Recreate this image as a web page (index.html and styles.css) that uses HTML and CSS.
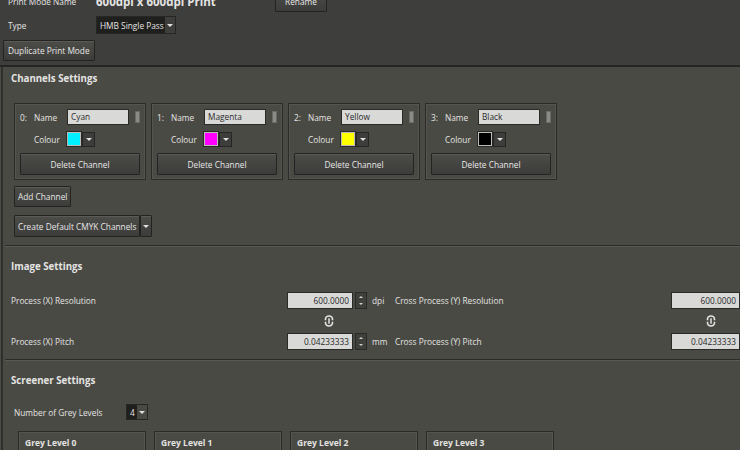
FILE: index.html
```html
<!DOCTYPE html>
<html lang="en">

<head>
    <meta charset="UTF-8">
    <title>Print Mode</title>
    <link rel="stylesheet" href="styles.css">
</head>

<body>
    <div class="header">
        <div class="row name-row">
            <span class="label">Print Mode Name</span>
            <span class="mode-title">600dpi x 600dpi Print</span>
            <button class="btn rename-btn">Rename</button>
        </div>
        <div class="row type-row">
            <span class="label">Type</span>
            <div class="combo dark-combo">
                <span class="combo-text">HMB Single Pass</span>
                <span class="combo-arrow"></span>
            </div>
        </div>
        <button class="btn dup-btn">Duplicate Print Mode</button>
    </div>

    <div class="main">
        <div class="section first">
            <h2>Channels Settings</h2>
            <div class="channels" id="channels"></div>
            <button class="btn add-btn">Add Channel</button>
            <div class="split-btn">
                <button class="btn split-main">Create Default CMYK Channels</button>
                <button class="btn split-arrow"><span class="combo-arrow"></span></button>
            </div>
        </div>

        <div class="section">
            <h2>Image Settings</h2>
            <div class="res-grid">
                <span class="field-label">Process (X) Resolution</span>
                <div class="spin">
                    <span class="spin-value">600.0000</span>
                    <span class="spin-btns"><i class="up"></i><i class="down"></i></span>
                </div>
                <span class="unit">dpi</span>
                <span class="field-label">Cross Process (Y) Resolution</span>
                <div class="plain-value">600.0000</div>

                <span></span>
                <div class="link-cell"><svg class="link-icon" viewBox="0 0 10 12"><path d="M1.5 5.2 V4.2 A3.5 3.2 0 0 1 8.5 4.2 V5.2 M1.5 6.8 V7.8 A3.5 3.2 0 0 0 8.5 7.8 V6.8" fill="none" stroke="#e6e6e6" stroke-width="1.6"/><line x1="5" y1="3.2" x2="5" y2="8.8" stroke="#e6e6e6" stroke-width="1.5"/></svg></div>
                <span></span>
                <span></span>
                <div class="link-cell right-link"><svg class="link-icon" viewBox="0 0 10 12"><path d="M1.5 5.2 V4.2 A3.5 3.2 0 0 1 8.5 4.2 V5.2 M1.5 6.8 V7.8 A3.5 3.2 0 0 0 8.5 7.8 V6.8" fill="none" stroke="#e6e6e6" stroke-width="1.6"/><line x1="5" y1="3.2" x2="5" y2="8.8" stroke="#e6e6e6" stroke-width="1.5"/></svg></div>

                <span class="field-label">Process (X) Pitch</span>
                <div class="spin">
                    <span class="spin-value">0.04233333</span>
                    <span class="spin-btns"><i class="up"></i><i class="down"></i></span>
                </div>
                <span class="unit">mm</span>
                <span class="field-label">Cross Process (Y) Pitch</span>
                <div class="plain-value">0.04233333</div>
            </div>
        </div>

        <div class="section last">
            <h2>Screener Settings</h2>
            <div class="row grey-row">
                <span class="field-label">Number of Grey Levels</span>
                <div class="combo small-combo">
                    <span class="combo-text">4</span>
                    <span class="combo-arrow"></span>
                </div>
            </div>
            <div class="grey-levels">
                <div class="grey-card"><h3>Grey Level 0</h3></div>
                <div class="grey-card"><h3>Grey Level 1</h3></div>
                <div class="grey-card"><h3>Grey Level 2</h3></div>
                <div class="grey-card"><h3>Grey Level 3</h3></div>
            </div>
        </div>
    </div>

    <script>
        const channels = [
            { name: "Cyan", colour: "#00f0ff" },
            { name: "Magenta", colour: "#ff00ff" },
            { name: "Yellow", colour: "#ffff00" },
            { name: "Black", colour: "#000000" }
        ];

        const holder = document.getElementById('channels');
        channels.forEach((ch, i) => {
            const card = document.createElement('div');
            card.className = 'channel-card';
            card.innerHTML = `
                <div class="ch-row">
                    <span class="ch-index">${i}:</span>
                    <span class="ch-label">Name</span>
                    <div class="ch-input">${ch.name}</div>
                    <span class="ch-handle"></span>
                </div>
                <div class="ch-row">
                    <span class="ch-index"></span>
                    <span class="ch-label">Colour</span>
                    <span class="swatch" style="background:${ch.colour}"></span>
                    <span class="swatch-arrow"><span class="combo-arrow"></span></span>
                </div>
                <button class="btn delete-btn">Delete Channel</button>`;
            holder.appendChild(card);
        });
    </script>
</body>

</html>
```

FILE: styles.css
```css
body {
    margin: 0;
    font-family: "Open Sans", "Noto Sans", sans-serif;
    font-size: 8.3px;
    color: #e4e4e2;
    background: #4a4a45;
    width: 740px;
    height: 450px;
    overflow: hidden;
}

.header {
    background: #3e3e3c;
    padding: 0 0 4px 3px;
    margin-top: -10px;
    border-bottom: 2px solid #252524;
}

.row {
    display: flex;
    align-items: center;
}

.label {
    width: 88px;
    padding-left: 5px;
}

.name-row {
    height: 22px;
}

.mode-title {
    font-weight: bold;
    font-size: 11.5px;
    width: 179px;
}

.type-row {
    height: 22px;
    margin-top: 2px;
}

.btn {
    font-family: inherit;
    font-size: 8.3px;
    color: #e8e8e6;
    background: linear-gradient(#4c4c49, #3c3c3a);
    border: 1px solid #232322;
    box-shadow: inset 0 1px 0 rgba(255, 255, 255, 0.08);
    padding: 0 5px;
    border-radius: 1px;
    white-space: nowrap;
    cursor: pointer;
}

.rename-btn {
    height: 21px;
    width: 52px;
}

.dup-btn {
    height: 21px;
    margin-top: 4px;
    padding: 0 4px;
}

.combo {
    display: flex;
    align-items: stretch;
    height: 16px;
    border: 1px solid #262625;
}

.combo-text {
    display: flex;
    align-items: center;
    padding: 0 4px;
    white-space: nowrap;
}

.dark-combo .combo-text {
    background: #1f1f1e;
    width: 62px;
    padding: 0 3px;
}

.combo-arrow {
    display: inline-block;
    width: 0;
    height: 0;
    border-left: 3px solid transparent;
    border-right: 3px solid transparent;
    border-top: 3px solid #e0e0e0;
}

.combo > .combo-arrow {
    width: 10px;
    background: #4a4a47;
    border: none;
    position: relative;
}

.combo > .combo-arrow::after {
    content: "";
    position: absolute;
    left: 2px;
    top: 7px;
    border-left: 3px solid transparent;
    border-right: 3px solid transparent;
    border-top: 3px solid #e0e0e0;
}

.main {
    border-left: 2px solid #2f2f2d;
    margin-left: 1px;
}

.section {
    padding: 14px 0 8px 9px;
    border-bottom: 1px solid #2b2b29;
    box-shadow: 0 1px 0 #5a5a55;
    margin-left: 2px;
}

.section.first {
    padding-top: 5px;
}

.section.last {
    border-bottom: none;
    box-shadow: none;
}

h2 {
    font-size: 9.7px;
    font-weight: bold;
    margin: 0 0 17px -3px;
    height: 14px;
    line-height: 14px;
}

.channels {
    display: flex;
    gap: 5px;
}

.channel-card {
    width: 120px;
    height: 70px;
    border: 1px solid #2b2b29;
    box-shadow: inset 0 0 0 1px #55554f;
    padding: 5px 5px 0 5px;
}

.ch-row {
    display: flex;
    align-items: center;
    height: 16px;
    margin-bottom: 6px;
}

.ch-index {
    width: 14px;
}

.ch-label {
    width: 33px;
}

.ch-input {
    width: 57px;
    height: 14px;
    background: #d9d9d8;
    color: #2a2a2a;
    border: 1px solid #2a2a28;
    padding-left: 3px;
    line-height: 14px;
}

.ch-handle {
    width: 3px;
    height: 10px;
    background: #8a8a86;
    border: 1px solid #6a6a66;
    margin-left: 6px;
}

.swatch {
    width: 12px;
    height: 12px;
    border: 1px solid #bbbbb8;
    outline: 1px solid #2a2a28;
}

.swatch-arrow {
    display: flex;
    align-items: center;
    justify-content: center;
    width: 11px;
    height: 13px;
    margin-left: 1px;
    background: #3d3d3b;
    border: 1px solid #262625;
}

.delete-btn {
    width: 120px;
    height: 22px;
}

.add-btn {
    display: block;
    height: 21px;
    margin-top: 6px;
    padding: 0 3px;
}

.split-btn {
    display: flex;
    margin-top: 8px;
}

.split-main {
    height: 22px;
    padding: 0 3px;
}

.split-arrow {
    width: 12px;
    height: 22px;
    padding: 0;
    display: flex;
    align-items: center;
    justify-content: center;
}

.res-grid {
    display: grid;
    grid-template-columns: 276px 83px 25px 276px 69px;
    grid-template-rows: 19px 22px 19px;
    align-items: center;
    margin-left: -3px;
}

.field-label {
    white-space: nowrap;
}

.spin {
    display: flex;
    height: 17px;
}

.spin-value,
.plain-value {
    background: #d9d9d8;
    color: #2a2a2a;
    border: 1px solid #2a2a28;
    text-align: right;
    padding-right: 3px;
    line-height: 15px;
    box-sizing: border-box;
    height: 17px;
}

.spin-value {
    width: 66px;
}

.plain-value {
    width: 69px;
}

.spin-btns {
    display: flex;
    flex-direction: column;
    width: 10px;
    margin-left: 2px;
    background: #3f3f3c;
    border: 1px solid #2a2a28;
    align-items: center;
    justify-content: space-around;
}

.spin-btns i {
    width: 0;
    height: 0;
    border-left: 2px solid transparent;
    border-right: 2px solid transparent;
}

.spin-btns .up {
    border-bottom: 2px solid #d0d0d0;
}

.spin-btns .down {
    border-top: 2px solid #d0d0d0;
}

.unit {
    padding-left: 2px;
}

.link-cell {
    display: flex;
    justify-content: center;
}

.right-link {
    padding-left: 10px;
}

.link-icon {
    width: 10px;
    height: 12px;
}

.grey-row {
    height: 18px;
    margin-top: -2px;
}

.grey-row .field-label {
    width: 112px;
}

.small-combo {
    height: 14px;
}

.small-combo .combo-text {
    background: #1f1f1e;
    width: 4px;
    padding: 0 3px;
}

.small-combo > .combo-arrow::after {
    top: 6px;
}

.grey-levels {
    display: flex;
    gap: 8px;
    margin: 10px 0 0 4px;
}

.grey-card {
    width: 126px;
    height: 40px;
    border: 1px solid #2b2b29;
    box-shadow: inset 0 0 0 1px #55554f;
}

.grey-card h3 {
    font-size: 8.5px;
    font-weight: bold;
    margin: 5px 0 0 6px;
}
```
